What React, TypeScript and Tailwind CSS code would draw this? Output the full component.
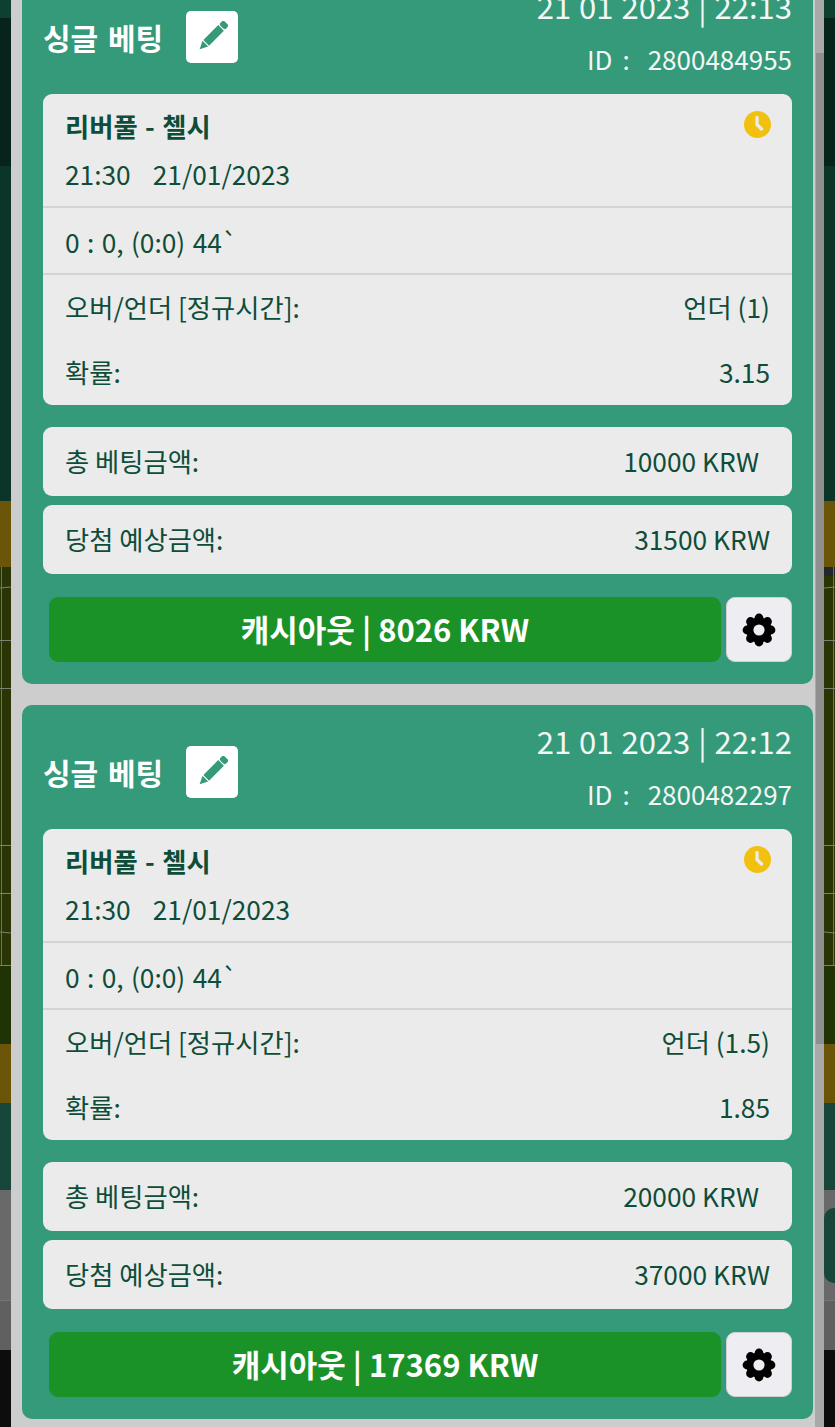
function Gear() {
  const lobes = [0, 45, 90, 135, 180, 225, 270, 315];
  return (
    <svg width="34" height="34" viewBox="0 0 34 34">
      <defs>
        <mask id="gear-hole">
          <rect width="34" height="34" fill="white" />
          <circle cx="17" cy="17" r="5.6" fill="black" />
        </mask>
      </defs>
      <g mask="url(#gear-hole)" fill="#000">
        <circle cx="17" cy="17" r="12.8" />
        {lobes.map((a) => (
          <circle key={a} cx="17" cy="5" r="4.4" transform={`rotate(${a} 17 17)`} />
        ))}
      </g>
    </svg>
  );
}

function Pencil() {
  return (
    <svg width="32" height="32" viewBox="0 0 32 32" fill="currentColor">
      <g transform="rotate(45 16 16)">
        <rect x="12" y="-4" width="8" height="6" rx="2" />
        <rect x="12" y="3.2" width="8" height="21" />
        <path d="M12 25.4h8L16 33.5z" />
      </g>
    </svg>
  );
}

function Clock() {
  return (
    <svg width="27" height="27" viewBox="0 0 27 27" className="absolute right-[21px] top-[17px]">
      <circle cx="13.5" cy="13.5" r="13.5" fill="#f2c00e" />
      <path d="M13 6.5V13.5L17.5 18" fill="none" stroke="#ebebeb" strokeWidth="3.4" strokeLinecap="round" strokeLinejoin="round" />
    </svg>
  );
}

function Row({ label, value, extra = "" }: { label: string; value: string; extra?: string }) {
  return (
    <div className="flex items-center justify-between">
      <span>{label}</span>
      <span className={extra}>{value}</span>
    </div>
  );
}

type CardProps = {
  time: string;
  id: string;
  under: string;
  odds: string;
  stake: string;
  win: string;
  cash: string;
};

function Card({ time, id, under, odds, stake, win, cash }: CardProps) {
  return (
    <div className="h-[714px] rounded-[10px] bg-[#359a79] px-[21px] pt-[18px]">
      <div className="flex h-[106px] items-start justify-between">
        <div className="flex items-center gap-[23px] pt-[23px]">
          <span className="text-[30px] font-bold leading-[52px] text-white [word-spacing:3px]">싱글 베팅</span>
          <span className="flex h-[52px] w-[52px] items-center justify-center rounded-[5px] bg-white text-[#359a79]">
            <Pencil />
          </span>
        </div>
        <div className="text-right text-[#f3f7f5]">
          <div className="text-[31px] leading-[36px] [word-spacing:1px]">21 01 2023 | {time}</div>
          <div className="mt-[18px] flex items-center justify-end text-[26px] leading-[34px]">
            <span>ID</span>
            <span className="ml-[10px]">:</span>
            <span className="ml-[18px]">{id}</span>
          </div>
        </div>
      </div>

      <div className="overflow-hidden rounded-[9px] bg-[#ebebeb] text-[26.3px] text-[#0e4d39]">
        <div className="relative h-[112px] px-[22px] pt-[12px]">
          <div className="font-bold leading-[40px] [word-spacing:1.5px]">리버풀 - 첼시</div>
          <div className="mt-[8px] flex leading-[40px]">
            <span>21:30</span>
            <span className="ml-[22px]">21/01/2023</span>
          </div>
          <Clock />
        </div>
        <div className="flex h-[69px] items-center border-y-2 border-[#d4d4d4] px-[22px] pt-[2px] [word-spacing:1.5px]">
          <span>0 : 0, (0:0) 44`</span>
        </div>
        <div className="flex h-[130px] flex-col gap-[25px] px-[22px] pt-[12px] leading-[40px]">
          <Row label="오버/언더 [정규시간]:" value={under} />
          <Row label="확률:" value={odds} />
        </div>
      </div>

      <div className="mt-[22px] flex h-[69px] items-center rounded-[9px] bg-[#ebebeb] px-[22px] pb-[1px] text-[26.3px] text-[#0e4d39]">
        <div className="w-full">
          <Row label="총 베팅금액:" value={stake} extra="pr-[11px]" />
        </div>
      </div>
      <div className="mt-[9px] flex h-[69px] items-center rounded-[9px] bg-[#ebebeb] px-[22px] pb-[1px] text-[26.3px] text-[#0e4d39]">
        <div className="w-full">
          <Row label="당첨 예상금액:" value={win} />
        </div>
      </div>

      <div className="mt-[23px] flex gap-[5px] pl-[6px]">
        <button className="flex h-[65px] w-[672px] items-center justify-center rounded-[9px] bg-[#1a9227] text-[31px] font-bold text-white">
          캐시아웃 | {cash} KRW
        </button>
        <button className="flex h-[65px] w-[66px] items-center justify-center rounded-[9px] border border-[#d0d0d4] bg-[#eeeef2]">
          <Gear />
        </button>
      </div>
    </div>
  );
}

function Strip({ right = false }: { right?: boolean }) {
  return (
    <div className="flex h-[1427px] w-full flex-col overflow-hidden">
      <div className="h-[18px] bg-[#0d4030]" />
      <div className="h-[148px] bg-[#06241b]" />
      <div className="h-[335px] bg-[#0a3528]" />
      <div className="h-[66px] bg-[#6b5508]" />
      <div className="relative h-[399px] bg-[#2a3505]">
        {right && <div className="absolute left-0 top-0 h-[9px] w-[11px] rounded-b-[4px] bg-[#23262b]" />}
        <div className={`absolute top-0 h-[399px] w-px bg-[#6f7460] ${right ? "right-[1px]" : "left-[1px]"}`} />
        <div className="absolute top-[20px] h-px w-full rotate-[-6deg] bg-[#7c8170]" />
        <div className="absolute top-[73px] h-px w-full bg-[#7c8170]" />
        <div className="absolute top-[121px] h-px w-full bg-[#7c8170]" />
        <div className="absolute top-[278px] h-px w-full bg-[#7c8170]" />
        <div className="absolute top-[326px] h-px w-full bg-[#7c8170]" />
        <div className="absolute top-[365px] h-px w-full rotate-[6deg] bg-[#7c8170]" />
        <div className="absolute top-[398px] h-px w-full bg-[#7c8170]" />
      </div>
      <div className="h-[78px] bg-[#1f3305]" />
      <div className="h-[59px] bg-[#6b5508]" />
      <div className="h-[87px] bg-[#17473a]" />
      <div className="relative h-[110px] bg-[#696969]">
        {right && <div className="absolute left-0 top-[18px] h-[75px] w-[14px] rounded-l-[10px] bg-[#17473a]" />}
      </div>
      <div className="h-[50px] border-t border-[#757575] bg-[#606060]" />
      <div className="h-[77px] bg-[#0d0d0d]" />
    </div>
  );
}

export default function App() {
  return (
    <div
      className="grid h-[1427px] w-[835px] grid-cols-[11px_1fr_11px] overflow-hidden"
      style={{ fontFamily: '"Noto Sans CJK KR", "Noto Sans", sans-serif' }}
    >
      <Strip />
      <div className="flex h-[1427px] overflow-hidden bg-[#cdcdcd]">
        <div className="-mt-[30px] flex w-[802px] shrink-0 flex-col gap-[21px] pl-[11px]">
          <Card time="22:13" id="2800484955" under="언더 (1)" odds="3.15" stake="10000 KRW" win="31500 KRW" cash="8026" />
          <Card time="22:12" id="2800482297" under="언더 (1.5)" odds="1.85" stake="20000 KRW" win="37000 KRW" cash="17369" />
        </div>
        <div className="ml-[2px] flex h-[1427px] w-[9px] shrink-0 flex-col bg-[#a9a9a9] pl-[1px]">
          <div className="h-[53px] shrink-0" />
          <div className="h-[991px] shrink-0 bg-[#8f8f8f]" />
        </div>
      </div>
      <Strip right />
    </div>
  );
}
